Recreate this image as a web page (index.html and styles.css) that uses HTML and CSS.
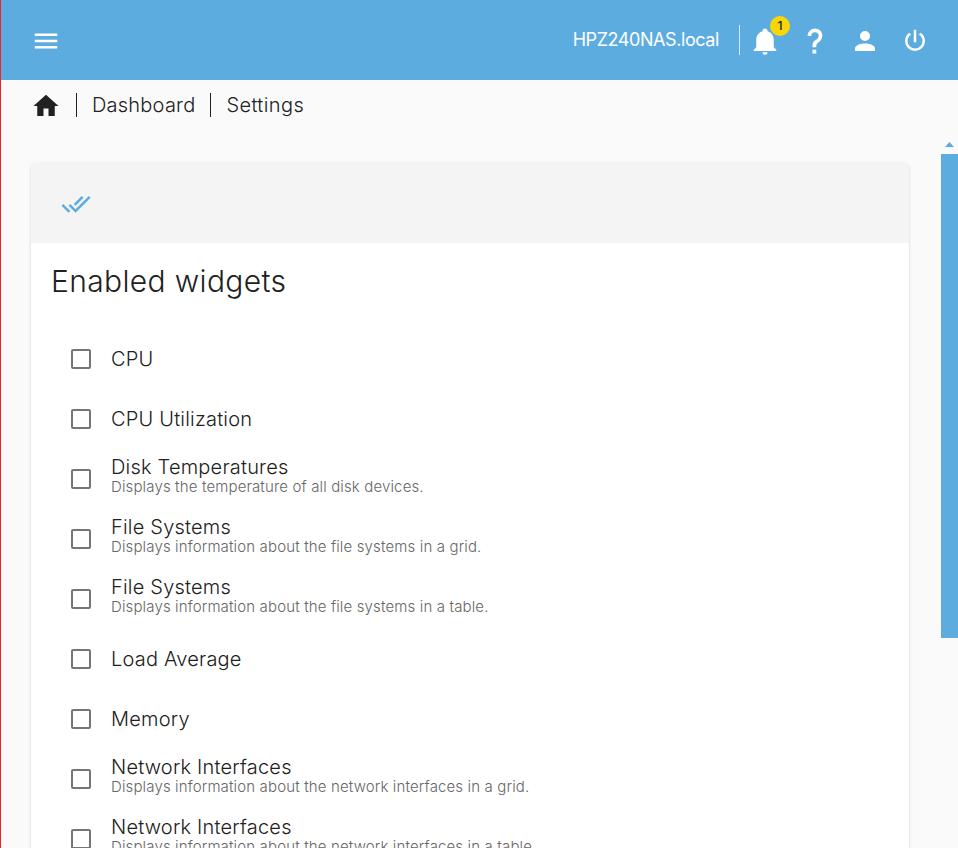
FILE: index.html
```
<!DOCTYPE html>
<html lang="en">
<head>
<meta charset="utf-8">
<title>Dashboard settings</title>
<link rel="stylesheet" href="styles.css">
</head>
<body>
<div class="app">
  <header class="topbar">
    <svg class="icon" viewBox="0 0 24 24"><path d="M3,6H21V8H3V6M3,11H21V13H3V11M3,16H21V18H3V16Z"/></svg>
    <span class="hostname">HPZ240NAS.local</span>
    <span class="divider"></span>
    <nav class="actions">
      <span class="action"><svg class="icon" viewBox="0 0 24 24"><path d="M21,19V20H3V19L5,17V11C5,7.9 7.03,5.17 10,4.29C10,4.19 10,4.1 10,4A2,2 0 0,1 12,2A2,2 0 0,1 14,4C14,4.1 14,4.19 14,4.29C16.97,5.17 19,7.9 19,11V17L21,19M14,21A2,2 0 0,1 12,23A2,2 0 0,1 10,21"/></svg><span class="badge">1</span></span>
      <span class="action"><svg class="icon" viewBox="0 0 24 24"><path d="M10,19H13V22H10V19M12,2C17.35,2.22 19.68,7.62 16.5,11.67C15.67,12.67 14.33,13.33 13.67,14.17C13,15 13,16 13,17H10C10,15.33 10,13.92 10.67,12.92C11.33,11.92 12.67,11.33 13.5,10.67C15.92,8.43 15.32,5.26 12,5A3,3 0 0,0 9,8H6A6,6 0 0,1 12,2Z"/></svg></span>
      <span class="action"><svg class="icon" viewBox="0 0 24 24"><path d="M12,4A4,4 0 0,1 16,8A4,4 0 0,1 12,12A4,4 0 0,1 8,8A4,4 0 0,1 12,4M12,14C16.42,14 20,15.79 20,18V20H4V18C4,15.79 7.58,14 12,14Z"/></svg></span>
      <span class="action"><svg class="icon" viewBox="0 0 24 24"><path d="M16.56,5.44L15.11,6.89C16.84,7.94 18,9.83 18,12A6,6 0 0,1 12,18A6,6 0 0,1 6,12C6,9.83 7.16,7.94 8.88,6.88L7.44,5.44C5.36,6.88 4,9.28 4,12A8,8 0 0,0 12,20A8,8 0 0,0 20,12C20,9.28 18.64,6.88 16.56,5.44M13,3H11V13H13"/></svg></span>
    </nav>
  </header>
  <nav class="breadcrumb">
    <svg class="icon" viewBox="0 0 24 24"><path d="M10,20V14H14V20H19V12H22L12,3L2,12H5V20H10Z"/></svg>
    <span class="crumb">Dashboard</span>
    <span class="crumb">Settings</span>
  </nav>
  <div class="workspace">
    <main class="card">
      <div class="toolbar">
        <svg class="icon" viewBox="0 0 24 24"><path d="M0.41,13.41L6,19L7.41,17.58L1.83,12M22.24,5.58L11.66,16.17L7.5,12L6.07,13.41L11.66,19L23.66,7M18,7L16.59,5.58L10.24,11.93L11.66,13.34L18,7Z"/></svg>
      </div>
      <h1 class="title">Enabled widgets</h1>
      <ul class="widgets">
        <li class="widget"><span class="checkbox"></span><div class="label"><div class="name">CPU</div></div></li>
        <li class="widget"><span class="checkbox"></span><div class="label"><div class="name">CPU Utilization</div></div></li>
        <li class="widget"><span class="checkbox"></span><div class="label"><div class="name">Disk Temperatures</div><div class="hint">Displays the temperature of all disk devices.</div></div></li>
        <li class="widget"><span class="checkbox"></span><div class="label"><div class="name">File Systems</div><div class="hint">Displays information about the file systems in a grid.</div></div></li>
        <li class="widget"><span class="checkbox"></span><div class="label"><div class="name">File Systems</div><div class="hint">Displays information about the file systems in a table.</div></div></li>
        <li class="widget"><span class="checkbox"></span><div class="label"><div class="name">Load Average</div></div></li>
        <li class="widget"><span class="checkbox"></span><div class="label"><div class="name">Memory</div></div></li>
        <li class="widget"><span class="checkbox"></span><div class="label"><div class="name">Network Interfaces</div><div class="hint">Displays information about the network interfaces in a grid.</div></div></li>
        <li class="widget"><span class="checkbox"></span><div class="label"><div class="name">Network Interfaces</div><div class="hint">Displays information about the network interfaces in a table.</div></div></li>
      </ul>
    </main>
    <div class="scrollbar">
      <svg class="arrow" viewBox="0 0 9 5"><path d="M4.5 0L9 5H0Z"/></svg>
      <div class="thumb"></div>
    </div>
  </div>
</div>
</body>
</html>
```
FILE: styles.css
```
* { box-sizing: border-box; }
body { margin: 0; overflow: hidden; }
.app {
  height: 848px;
  border-left: 1px solid #ed2330;
  background: #fafafa;
  color: #212121;
  font-family: Inter, sans-serif;
  font-weight: 300;
  display: flex;
  flex-direction: column;
  overflow: hidden;
}
.icon { width: 30px; height: 30px; flex: none; display: block; fill: currentColor; }
.topbar {
  height: 80px;
  flex: none;
  display: flex;
  align-items: center;
  padding: 2px 18px 0 30px;
  background: #5dacdf;
  color: #fff;
}
.hostname { margin-left: auto; font-size: 18px; font-weight: 400; line-height: 24px; margin-top: -3px; letter-spacing: -.42px; }
.divider { width: 1px; height: 30px; margin: -2px 0 0 20px; background: rgba(255,255,255,.75); }
.actions { display: flex; }
.action { width: 50px; height: 50px; display: grid; place-items: center; position: relative; }
.badge {
  position: absolute;
  left: 30px;
  top: 0;
  width: 20px;
  height: 20px;
  border-radius: 50%;
  background: #f9d605;
  color: #212121;
  font-size: 12px;
  font-weight: 500;
  line-height: 20px;
  text-align: center;
}
.breadcrumb { height: 50px; flex: none; display: flex; align-items: center; padding-left: 30px; }
.breadcrumb .icon { margin-top: 2px; }
.crumb { margin-left: 15px; padding-left: 15px; border-left: 1px solid #212121; font-size: 20px; line-height: 24px; letter-spacing: .22px; }
.crumb:last-child { letter-spacing: .4px; }
.workspace { flex: 1; min-height: 0; display: flex; justify-content: space-between; padding-left: 30px; }
.card {
  width: 878px;
  margin-top: 33px;
  height: 760px;
  border-radius: 5px;
  background: #fff;
  box-shadow: 0 1px 3px rgba(0,0,0,.17);
}
.toolbar { height: 80px; display: flex; align-items: center; padding: 2px 30px 0; border-radius: 5px 5px 0 0; background: #f4f4f4; color: #5dacdf; }
.title { margin: 19px 20px 29px; font-size: 30px; line-height: 38px; font-weight: 300; letter-spacing: .35px; }
.widgets { list-style: none; margin: 0; padding: 0 40px; }
.widget { height: 60px; display: flex; align-items: center; gap: 20px; }
.checkbox { width: 20px; height: 20px; flex: none; border: 2px solid #757575; border-radius: 2px; }
.name { font-size: 20px; line-height: 20px; letter-spacing: .2px; }
.hint { font-size: 15px; line-height: 20px; margin-bottom: 4px; color: #666; letter-spacing: .14px; }
.scrollbar { width: 17px; padding-top: 12px; }
.arrow { width: 9px; height: 5px; display: block; margin: 0 auto 7px; fill: #5dacdf; }
.thumb { height: 484px; background: #5dacdf; }
```
